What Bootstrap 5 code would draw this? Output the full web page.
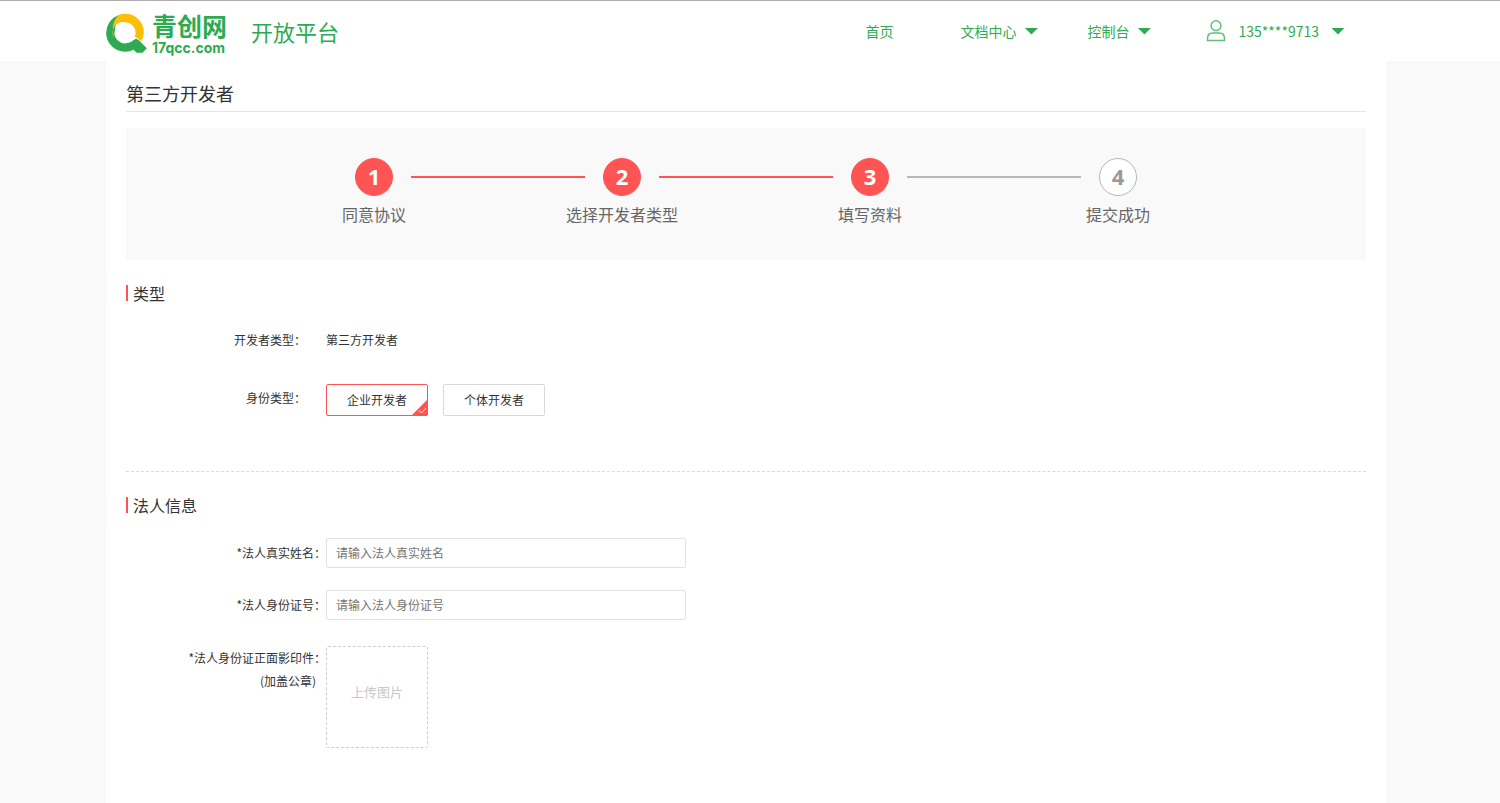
<!DOCTYPE html>
<html lang="zh-CN">
<head>
<meta charset="utf-8">
<meta name="viewport" content="width=device-width, initial-scale=1">
<title>青创网开放平台</title>
<link href="https://cdn.jsdelivr.net/npm/bootstrap@5.3.0/dist/css/bootstrap.min.css" rel="stylesheet">
<style>
  :root { --brand: #2eab50; --accent: #ff5454; --muted-line: #b7b7b7; }
  body {
    font-family: "Noto Sans CJK SC", sans-serif;
    font-size: 12px;
    line-height: 24px;
    color: #333;
    background: #f9f9f9;
  }
  .page-width { max-width: 1280px; }
  .site-header { border-top: 1px solid #aeaeae; }
  .site-header, .page-body { padding-right: 8px; }
  .site-header .navbar { height: 60px; }
  .site-header a { color: var(--brand); text-decoration: none; }
  .brand-text { padding-top: 4px; }
  .brand-name { font-size: 25px; font-weight: 700; line-height: 26px; }
  .brand-host { font-family: Inter, sans-serif; font-size: 14px; font-weight: 700; line-height: 20px; }
  .platform-name { font-size: 22px; line-height: 30px; }
  .top-menu { font-size: 14px; line-height: 22px; padding-right: 41px; }
  .top-menu .caret { width: 14px; height: 7px; background: var(--brand); clip-path: polygon(0 0, 100% 0, 50% 100%); }
  .menu-gap { margin-right: 49px; }
  .menu-gap-user { margin-right: 55px; }
  .menu-gap-wide { margin-right: 67px; }
  .user-link { gap: 12px; }

  .page-body { display: flex; min-height: calc(100vh - 61px); }
  .sheet { padding: 20px 20px 55px; }
  .sheet-title { font-size: 18px; line-height: 24px; padding-bottom: 6px; border-bottom: 1px solid #e5e5e5; margin-bottom: 16px; }

  .steps { background: #f9f9f9; padding: 30px 10% 34px; }
  .step { flex: 1 1 0; text-align: center; font-size: 16px; line-height: 24px; color: #666; }
  .step-track { display: flex; align-items: center; gap: 18px; margin-bottom: 6px; }
  .step-track::before, .step-track::after { content: ""; flex: 1; height: 2px; background: var(--accent); }
  .step:first-child .step-track::before, .step:last-child .step-track::after { visibility: hidden; }
  .step.current .step-track::after, .step.pending .step-track::before { background: var(--muted-line); }
  .step-dot {
    width: 38px; height: 38px; border-radius: 50%; border: 1px solid var(--accent);
    background: var(--accent); color: #fff; font: 700 22px/35px "Open Sans", sans-serif;
  }
  .pending .step-dot { background: #fff; border-color: var(--muted-line); color: #999; }

  .form-block { padding-top: 25px; }
  .section-title { font-size: 16px; line-height: 16px; border-left: 2px solid var(--accent); padding-left: 5px; margin: 0 0 25px; }
  .form-line { display: flex; }
  .type-line { padding-top: 2px; }
  .entry-line { align-items: center; margin-bottom: 22px; }
  .choice-line { align-items: center; gap: 15px; margin: 32px 0 55px; }
  .line-label { flex: 0 0 200px; text-align: right; }
  .line-label.inset { padding-right: 20px; }
  .choice-line .line-label { margin-right: -15px; padding-bottom: 4px; }
  .upload-line { padding-top: 4px; line-height: 23px; }
  .seal-note { padding-right: 10px; }

  .choice {
    width: 102px; height: 32px; padding: 0; border: 1px solid #d9d9d9; border-radius: 2px;
    font-size: 12px; line-height: 30px; color: #333; background: #fff; position: relative;
  }
  .choice svg { position: absolute; right: -1px; bottom: -1px; display: none; }
  .btn-check:checked + .choice { border-color: var(--accent); background: #fff; color: #333; }
  .btn-check:checked + .choice svg { display: block; }
  .section-rule { border-top: 1px dashed #dbdbdb; }

  .text-entry {
    width: 360px; height: 30px; padding: 0 9px 1px; border: 1px solid #e2e2e2; border-radius: 2px;
    font-size: 12px; color: #333;
  }
  .text-entry::placeholder { color: #757575; }
  .upload-box {
    width: 102px; height: 102px; border: 1px dashed #cfcfcf; border-radius: 2px; padding: 0 0 12px;
    font-size: 13px; color: #c8c8c8; background: #fff;
  }
</style>
</head>
<body>
<header class="site-header bg-white">
  <div class="page-width container-fluid px-0">
    <nav class="navbar p-0 justify-content-between">
      <div class="d-flex align-items-center">
        <a href="#" class="d-flex align-items-center gap-1 mt-1">
          <svg width="42" height="40" viewBox="20 15 126 121" aria-hidden="true">
            <path d="M62 20A57 57 0 0 0 77 132Q92 132 103 126L112 135H130L143 122L118 97Q110 91 103 97Q92 107 77 107A32 32 0 0 1 45 75L50 45Z" fill="#2eab50"/>
            <path d="M44 91Q32 45 58 21Q67 17 77 17A57 57 0 0 1 134 74Q133 90 126 101Q116 90 106 87Q109 82 109 75A32 32 0 0 0 77 43A32 32 0 0 0 44 91Z" fill="#fbbf08"/>
          </svg>
          <span class="brand-text d-flex flex-column">
            <span class="brand-name">青创网</span>
            <span class="brand-host">17qcc.com</span>
          </span>
        </a>
        <a href="#" class="platform-name ms-4">开放平台</a>
      </div>
      <div class="top-menu d-flex align-items-center">
        <a href="#" class="menu-gap-wide">首页</a>
        <a href="#" class="menu-gap d-flex align-items-center gap-2">文档中心<span class="caret"></span></a>
        <a href="#" class="menu-gap-user d-flex align-items-center gap-2">控制台<span class="caret"></span></a>
        <a href="#" class="user-link d-flex align-items-center">
          <svg width="20" height="22" viewBox="0 0 20 22" fill="none" stroke="#5fc07a" stroke-width="1.500" aria-hidden="true">
            <circle cx="10" cy="5.700" r="4.900"/>
            <path d="M1.500 20.500V18.500Q1.500 13 7 13H13Q18.500 13 18.500 18.500V20.500Z"/>
          </svg>
          135****9713<span class="caret"></span>
        </a>
      </div>
    </nav>
  </div>
</header>

<div class="page-body">
  <main class="page-width container-fluid bg-white sheet">
    <h1 class="sheet-title fw-normal">第三方开发者</h1>

    <div class="steps d-flex">
      <div class="step"><div class="step-track"><span class="step-dot">1</span></div>同意协议</div>
      <div class="step"><div class="step-track"><span class="step-dot">2</span></div>选择开发者类型</div>
      <div class="step current"><div class="step-track"><span class="step-dot">3</span></div>填写资料</div>
      <div class="step pending"><div class="step-track"><span class="step-dot">4</span></div>提交成功</div>
    </div>

    <form>
      <section class="form-block">
        <h2 class="section-title fw-normal">类型</h2>
        <div class="form-line type-line">
          <span class="line-label inset">开发者类型：</span>
          <span>第三方开发者</span>
        </div>
        <div class="form-line choice-line" role="radiogroup" aria-labelledby="identity-label">
          <span class="line-label inset" id="identity-label">身份类型：</span>
          <input class="btn-check" type="radio" name="identity" id="identity-company" checked>
          <label class="btn choice" for="identity-company">企业开发者
            <svg width="17" height="17" viewBox="0 0 17 17" aria-hidden="true">
              <path d="M17 0V15Q17 17 15 17H0Z" fill="#ff5454"/>
              <path d="M8 11.500L10.500 14L15 9" fill="none" stroke="#fff"/>
            </svg>
          </label>
          <input class="btn-check" type="radio" name="identity" id="identity-person">
          <label class="btn choice" for="identity-person">个体开发者
            <svg width="17" height="17" viewBox="0 0 17 17" aria-hidden="true">
              <path d="M17 0V15Q17 17 15 17H0Z" fill="#ff5454"/>
              <path d="M8 11.500L10.500 14L15 9" fill="none" stroke="#fff"/>
            </svg>
          </label>
        </div>
      </section>

      <section class="form-block section-rule">
        <h2 class="section-title fw-normal">法人信息</h2>
        <div class="form-line entry-line">
          <label class="line-label" for="legal-name">*法人真实姓名：</label>
          <input class="text-entry" type="text" id="legal-name" placeholder="请输入法人真实姓名">
        </div>
        <div class="form-line entry-line">
          <label class="line-label" for="legal-id">*法人身份证号：</label>
          <input class="text-entry" type="text" id="legal-id" placeholder="请输入法人身份证号">
        </div>
        <div class="form-line upload-line">
          <label class="line-label" for="id-front">*法人身份证正面影印件：<br><span class="seal-note">(加盖公章)</span></label>
          <button class="upload-box" type="button" id="id-front">上传图片</button>
        </div>
      </section>
    </form>
  </main>
</div>
<script src="https://cdn.jsdelivr.net/npm/bootstrap@5.3.0/dist/js/bootstrap.bundle.min.js"></script>
</body>
</html>
